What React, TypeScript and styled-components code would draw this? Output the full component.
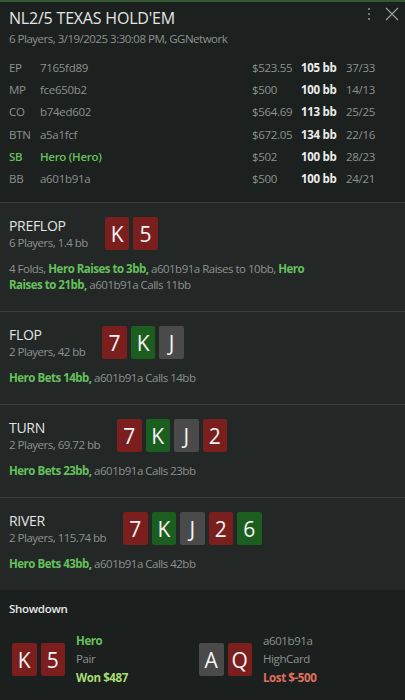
import React from "react";
import styled, { createGlobalStyle } from "styled-components";

const Global = createGlobalStyle`
  html, body { margin: 0; padding: 0; background: #1c211f; }
  body { font-family: "Open Sans", "Noto Sans", sans-serif; color: #8c9190; }
  * { box-sizing: border-box; }
`;

const Window = styled.div`
  position: relative;
  width: 405px;
  height: 700px;
  overflow: hidden;
  background: #1c211f;
  border-top: 2px solid #2f5a34;
  display: flex;
  flex-direction: column;
`;

const ScrollThumb = styled.div`
  position: absolute;
  right: 0;
  top: 0;
  width: 2px;
  height: 53px;
  background: #2f5a34;
`;

const Header = styled.div`
  position: relative;
  padding: 6px 9px 12px 9px;
  background: #1c211f;
`;

const Title = styled.div`
  font-size: 16px;
  line-height: 20px;
  color: #e4e6e5;
  letter-spacing: -0.2px;
`;

const Subtitle = styled.div`
  margin-top: 3px;
  font-size: 11.5px;
  line-height: 16px;
  letter-spacing: -0.5px;
  color: #8c9190;
`;

const Tools = styled.div`
  position: absolute;
  top: 5px;
  right: 6px;
  display: flex;
  align-items: center;
  gap: 14px;
`;

const PlayerTable = styled.div`
  margin-top: 9px;
  display: flex;
  flex-direction: column;
`;

const PlayerRow = styled.div<{ $hero?: boolean }>`
  display: grid;
  grid-template-columns: 31px 212px 49px 45px 1fr;
  height: 22.3px;
  align-items: center;
  font-size: 11.5px;
  letter-spacing: -0.3px;
  color: ${(p) => (p.$hero ? "#66c05c" : "#8c9190")};
  font-weight: ${(p) => (p.$hero ? 600 : 400)};
`;

const Bb = styled.span`
  color: #ececec;
  font-weight: 700;
`;

const Ratio = styled.span`
  color: #8c9190;
  font-weight: 400;
`;

const Stack = styled.span`
  color: #8c9190;
  font-weight: 400;
`;

const Street = styled.div`
  background: #232827;
  border-top: 1px solid #3a3f3e;
  padding: 14px 9px 18px 9px;
`;

const StreetHead = styled.div`
  display: flex;
  align-items: center;
  gap: 17px;
`;

const StreetInfo = styled.div`
  display: flex;
  flex-direction: column;
`;

const StreetName = styled.div`
  font-size: 14px;
  line-height: 18px;
  letter-spacing: -0.3px;
  color: #e2e4e3;
`;

const StreetSub = styled.div`
  font-size: 11.5px;
  line-height: 16px;
  letter-spacing: -0.5px;
  color: #8c9190;
`;

const Cards = styled.div`
  display: flex;
  gap: 4px;
`;

const CardBox = styled.div<{ $c: "r" | "g" | "k" }>`
  width: 24.5px;
  height: 33px;
  border-radius: 2px;
  display: flex;
  align-items: center;
  justify-content: center;
  font-size: 21px;
  color: #f4f4f4;
  background: ${(p) => (p.$c === "r" ? "#7b1e1e" : p.$c === "g" ? "#1b5e1f" : "#4a4a4a")};
`;

const Actions = styled.div`
  margin-top: 10px;
  font-size: 11.5px;
  line-height: 16px;
  letter-spacing: -0.5px;
  color: #8c9190;
  max-width: 318px;
`;

const Hero = styled.span`
  color: #66c05c;
  font-weight: 700;
`;

const Showdown = styled.div`
  flex: 1;
  background: #1b201e;
  padding: 11px 9px 0 9px;
`;

const ShowTitle = styled.div`
  font-size: 11.5px;
  line-height: 16px;
  font-weight: 600;
  letter-spacing: -0.3px;
  color: #e6e8e7;
`;

const ShowGrid = styled.div`
  margin-top: 15px;
  display: grid;
  grid-template-columns: 187px 1fr;
  padding-left: 3px;
`;

const Hand = styled.div`
  display: flex;
  align-items: center;
  gap: 11px;
`;

const HandText = styled.div`
  display: flex;
  flex-direction: column;
  font-size: 11.5px;
  line-height: 18.5px;
  letter-spacing: -0.4px;
`;

const Line = styled.span<{ $tone: "hero" | "gray" | "won" | "lost" }>`
  color: ${(p) =>
    p.$tone === "hero" ? "#66c05c" : p.$tone === "won" ? "#a8dc74" : p.$tone === "lost" ? "#e0705e" : "#8c9190"};
  font-weight: ${(p) => (p.$tone === "gray" ? 400 : 700)};
`;

type C = [string, "r" | "g" | "k"];

const CardRow = ({ cards }: { cards: C[] }) => (
  <Cards>
    {cards.map(([v, c], i) => (
      <CardBox key={i} $c={c}>
        {v}
      </CardBox>
    ))}
  </Cards>
);

const players = [
  ["EP", "7165fd89", "$523.55", "105 bb", "37/33"],
  ["MP", "fce650b2", "$500", "100 bb", "14/13"],
  ["CO", "b74ed602", "$564.69", "113 bb", "25/25"],
  ["BTN", "a5a1fcf", "$672.05", "134 bb", "22/16"],
  ["SB", "Hero (Hero)", "$502", "100 bb", "28/23"],
  ["BB", "a601b91a", "$500", "100 bb", "24/21"],
];

export default function App() {
  return (
    <>
      <Global />
      <Window>
        <ScrollThumb />
        <Header>
          <Title>NL2/5 TEXAS HOLD'EM</Title>
          <Subtitle>6 Players, 3/19/2025 3:30:08 PM, GGNetwork</Subtitle>
          <Tools>
            <svg width="4" height="14" viewBox="0 0 4 14">
              <circle cx="2" cy="2" r="1.1" fill="#8a8f8d" />
              <circle cx="2" cy="7" r="1.1" fill="#8a8f8d" />
              <circle cx="2" cy="12" r="1.1" fill="#8a8f8d" />
            </svg>
            <svg width="14" height="14" viewBox="0 0 14 14">
              <path d="M1 1 L13 13 M13 1 L1 13" stroke="#9a9e9c" strokeWidth="1.2" />
            </svg>
          </Tools>
          <PlayerTable>
            {players.map((p) => (
              <PlayerRow key={p[0]} $hero={p[0] === "SB"}>
                <span>{p[0]}</span>
                <span>{p[1]}</span>
                <Stack>{p[2]}</Stack>
                <Bb>{p[3]}</Bb>
                <Ratio>{p[4]}</Ratio>
              </PlayerRow>
            ))}
          </PlayerTable>
        </Header>

        <Street>
          <StreetHead>
            <StreetInfo>
              <StreetName>PREFLOP</StreetName>
              <StreetSub>6 Players, 1.4 bb</StreetSub>
            </StreetInfo>
            <CardRow cards={[["K", "r"], ["5", "r"]]} />
          </StreetHead>
          <Actions>
            4 Folds, <Hero>Hero Raises to 3bb,</Hero> a601b91a Raises to 10bb, <Hero>Hero</Hero>{" "}
            <Hero>Raises to 21bb,</Hero> a601b91a Calls 11bb
          </Actions>
        </Street>

        <Street>
          <StreetHead>
            <StreetInfo>
              <StreetName>FLOP</StreetName>
              <StreetSub>2 Players, 42 bb</StreetSub>
            </StreetInfo>
            <CardRow cards={[["7", "r"], ["K", "g"], ["J", "k"]]} />
          </StreetHead>
          <Actions>
            <Hero>Hero Bets 14bb,</Hero> a601b91a Calls 14bb
          </Actions>
        </Street>

        <Street>
          <StreetHead>
            <StreetInfo>
              <StreetName>TURN</StreetName>
              <StreetSub>2 Players, 69.72 bb</StreetSub>
            </StreetInfo>
            <CardRow cards={[["7", "r"], ["K", "g"], ["J", "k"], ["2", "r"]]} />
          </StreetHead>
          <Actions>
            <Hero>Hero Bets 23bb,</Hero> a601b91a Calls 23bb
          </Actions>
        </Street>

        <Street>
          <StreetHead>
            <StreetInfo>
              <StreetName>RIVER</StreetName>
              <StreetSub>2 Players, 115.74 bb</StreetSub>
            </StreetInfo>
            <CardRow cards={[["7", "r"], ["K", "g"], ["J", "k"], ["2", "r"], ["6", "g"]]} />
          </StreetHead>
          <Actions>
            <Hero>Hero Bets 43bb,</Hero> a601b91a Calls 42bb
          </Actions>
        </Street>

        <Showdown>
          <ShowTitle>Showdown</ShowTitle>
          <ShowGrid>
            <Hand>
              <CardRow cards={[["K", "r"], ["5", "r"]]} />
              <HandText>
                <Line $tone="hero">Hero</Line>
                <Line $tone="gray">Pair</Line>
                <Line $tone="won">Won $487</Line>
              </HandText>
            </Hand>
            <Hand>
              <CardRow cards={[["A", "k"], ["Q", "r"]]} />
              <HandText>
                <Line $tone="gray">a601b91a</Line>
                <Line $tone="gray">HighCard</Line>
                <Line $tone="lost">Lost $-500</Line>
              </HandText>
            </Hand>
          </ShowGrid>
        </Showdown>
      </Window>
    </>
  );
}
